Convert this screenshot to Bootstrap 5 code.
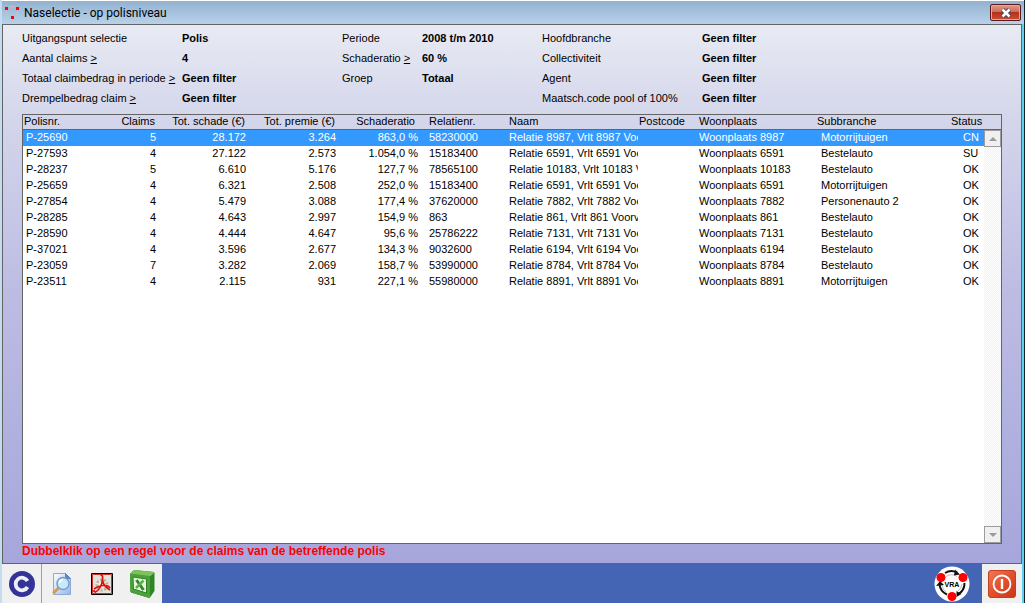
<!DOCTYPE html>
<html lang="nl">
<head>
<meta charset="utf-8">
<meta name="viewport" content="width=device-width, initial-scale=1">
<title>Naselectie - op polisniveau</title>
<link href="https://cdn.jsdelivr.net/npm/bootstrap@5.3.0/dist/css/bootstrap.min.css" rel="stylesheet">
<style>
  body { font: 11px/16px "Liberation Sans", Arial, sans-serif; color: #000; background: #b9d1ea; }
  .app-window { border-left: 2px solid #c4dcf2; border-right: 1px solid #10242c; box-shadow: inset -2px 0 #5cd0ee; padding-right: 2px; }
  .titlebar { height: 24px; margin-right: -2px; padding: 0 3px 0 2px; background: linear-gradient(#fff 0, #fff 1px, #93b2d0 1px, #b9d1ea 24px); }
  .titlebar h1 { font: 12px/24px Roboto, "Segoe UI", sans-serif; margin: 2px 0 0 4px; }
  .btn-close-win { width: 31px; height: 17px; margin-top: 1px; border: 1px solid #5a1a1c; border-radius: 2px; box-shadow: inset 0 0 0 1px #e6a79b; background: linear-gradient(#dd9a8c 0, #cf6b58 46%, #b5301a 50%, #c9503a 100%); }
  .panel { border: 1px solid #646464; padding: 3px 19px 4px 19px; background: linear-gradient(#e8ebf3 0, #d4d6eb 17%, #bcbce3 50%, #a6a6dc 100%); }
  .filters { display: grid; grid-template-columns: 160px 160px 80px 120px 160px 1fr; grid-auto-rows: 20px; line-height: 20px; margin-bottom: 6px; white-space: nowrap; }
  .filters dd, .filters dt { margin: 0; font-weight: 400; }
  .filters dd { font-weight: 700; }
  .c1 { grid-column: 1; } .c3 { grid-column: 3; } .c5 { grid-column: 5; }
  .listbox { border: 1px solid #646464; background: linear-gradient(transparent 15px, #fff 15px); }
  .polis { table-layout: fixed; width: 100%; border-collapse: separate; border-spacing: 0; }
  .polis th, .polis td { padding: 0; overflow: hidden; white-space: nowrap; font-weight: 400; vertical-align: top; }
  .polis th { height: 15px; line-height: 13px; border-bottom: 1px solid #646464; padding-left: 1px; }
  .polis td { height: 16px; line-height: 14px; padding-left: 3px; }
  .polis td:last-child { padding-left: 15px; }
  .polis th.num { text-align: right; padding-right: 3px; }
  .polis td.num { text-align: right; padding-right: 2px; }
  .polis th.ratio { padding-right: 5px; }
  .polis .rel { padding-left: 9px; }
  .polis th.inset { padding-left: 3px; }
  .polis th.sub { padding-left: 0; }
  .polis td.sub { padding-left: 4px; }
  .chosen td { background: #3399ff; color: #fff; }
  .w36 { width: 36px; } .w55 { width: 55px; } .w58 { width: 58px; } .w80 { width: 80px; } .w82 { width: 82px; }
  .w86 { width: 86px; } .w90 { width: 90px; } .w121 { width: 121px; } .w131 { width: 131px; }
  .scroll { width: 17px; }
  .scroll-cap { height: 15px; border-bottom: 1px solid #646464; }
  .track { background: repeating-conic-gradient(#f0f0f0 0 25%, #fff 0 50%) 0 0 / 2px 2px; }
  .scroll button { height: 17px; border: 1px solid #9c9c9c; background: #f0f0f0; }
  .hint { color: #f00; font-weight: 700; font-size: 12px; line-height: 15px; margin: 0; }
  .footbar { height: 39px; background: #4464b4; }
  .tool { width: 40px; height: 39px; border: 0; background: #f0f0f0; }
  .tool-c { border-right: 1px solid #a0a0a0; }
  .brand { margin-right: 12px; }
</style>
</head>
<body>
<div class="app-window min-vh-100 d-flex flex-column">
  <header class="titlebar d-flex align-items-center">
    <svg width="16" height="16" viewBox="0 0 16 16" aria-hidden="true"><path d="M5 3a6 6 0 0 1 6 0M2 6a7 7 0 0 0 3 6M14 7a7 7 0 0 1-3 5" fill="none" stroke="#c4c4c4"/><path d="M1 3h3v3H1zM12 3h3v3h-3zM7 12h3v3H7z" fill="#f00"/></svg>
    <h1>Naselectie - op polisniveau</h1>
    <button class="btn-close-win ms-auto p-0 d-flex align-items-center justify-content-center" aria-label="Sluiten"><svg width="12" height="10" viewBox="0 0 12 10"><path d="M2.500 1.500l7 7M9.500 1.500l-7 7" stroke="#404858" stroke-width="4.500"/><path d="M2.500 1.500l7 7M9.500 1.500l-7 7" stroke="#fff" stroke-width="2.500"/></svg></button>
  </header>

  <main class="panel flex-grow-1 d-flex flex-column">
    <dl class="filters">
      <dt class="c1">Uitgangspunt selectie</dt><dd>Polis</dd>
      <dt class="c3">Periode</dt><dd>2008 t/m 2010</dd>
      <dt class="c5">Hoofdbranche</dt><dd>Geen filter</dd>
      <dt class="c1">Aantal claims <u>&gt;</u></dt><dd>4</dd>
      <dt class="c3">Schaderatio <u>&gt;</u></dt><dd>60 %</dd>
      <dt class="c5">Collectiviteit</dt><dd>Geen filter</dd>
      <dt class="c1">Totaal claimbedrag in periode <u>&gt;</u></dt><dd>Geen filter</dd>
      <dt class="c3">Groep</dt><dd>Totaal</dd>
      <dt class="c5">Agent</dt><dd>Geen filter</dd>
      <dt class="c1">Drempelbedrag claim <u>&gt;</u></dt><dd>Geen filter</dd>
      <dt class="c5">Maatsch.code pool of 100%</dt><dd>Geen filter</dd>
    </dl>

    <div class="listbox flex-grow-1 d-flex">
      <div class="flex-grow-1">
        <table class="polis">
          <colgroup><col class="w80"><col class="w55"><col class="w90"><col class="w90"><col class="w82"><col class="w86"><col><col class="w58"><col class="w121"><col class="w131"><col class="w36"></colgroup>
          <thead><tr><th>Polisnr.</th><th class="num">Claims</th><th class="num">Tot. schade (€)</th><th class="num">Tot. premie (€)</th><th class="num ratio">Schaderatio</th><th class="rel">Relatienr.</th><th class="inset">Naam</th><th>Postcode</th><th class="inset">Woonplaats</th><th class="sub">Subbranche</th><th class="inset">Status</th></tr></thead>
          <tbody>
            <tr class="chosen"><td>P-25690</td><td class="num">5</td><td class="num">28.172</td><td class="num">3.264</td><td class="num">863,0 %</td><td class="rel">58230000</td><td>Relatie 8987, Vrlt 8987 Voorv</td><td></td><td>Woonplaats 8987</td><td class="sub">Motorrijtuigen</td><td>CN</td></tr>
            <tr><td>P-27593</td><td class="num">4</td><td class="num">27.122</td><td class="num">2.573</td><td class="num">1.054,0 %</td><td class="rel">15183400</td><td>Relatie 6591, Vrlt 6591 Voorv</td><td></td><td>Woonplaats 6591</td><td class="sub">Bestelauto</td><td>SU</td></tr>
            <tr><td>P-28237</td><td class="num">5</td><td class="num">6.610</td><td class="num">5.176</td><td class="num">127,7 %</td><td class="rel">78565100</td><td>Relatie 10183, Vrlt 10183 Voorv</td><td></td><td>Woonplaats 10183</td><td class="sub">Bestelauto</td><td>OK</td></tr>
            <tr><td>P-25659</td><td class="num">4</td><td class="num">6.321</td><td class="num">2.508</td><td class="num">252,0 %</td><td class="rel">15183400</td><td>Relatie 6591, Vrlt 6591 Voorv</td><td></td><td>Woonplaats 6591</td><td class="sub">Motorrijtuigen</td><td>OK</td></tr>
            <tr><td>P-27854</td><td class="num">4</td><td class="num">5.479</td><td class="num">3.088</td><td class="num">177,4 %</td><td class="rel">37620000</td><td>Relatie 7882, Vrlt 7882 Voorv</td><td></td><td>Woonplaats 7882</td><td class="sub">Personenauto 2</td><td>OK</td></tr>
            <tr><td>P-28285</td><td class="num">4</td><td class="num">4.643</td><td class="num">2.997</td><td class="num">154,9 %</td><td class="rel">863</td><td>Relatie 861, Vrlt 861 Voorv</td><td></td><td>Woonplaats 861</td><td class="sub">Bestelauto</td><td>OK</td></tr>
            <tr><td>P-28590</td><td class="num">4</td><td class="num">4.444</td><td class="num">4.647</td><td class="num">95,6 %</td><td class="rel">25786222</td><td>Relatie 7131, Vrlt 7131 Voorv</td><td></td><td>Woonplaats 7131</td><td class="sub">Bestelauto</td><td>OK</td></tr>
            <tr><td>P-37021</td><td class="num">4</td><td class="num">3.596</td><td class="num">2.677</td><td class="num">134,3 %</td><td class="rel">9032600</td><td>Relatie 6194, Vrlt 6194 Voorv</td><td></td><td>Woonplaats 6194</td><td class="sub">Bestelauto</td><td>OK</td></tr>
            <tr><td>P-23059</td><td class="num">7</td><td class="num">3.282</td><td class="num">2.069</td><td class="num">158,7 %</td><td class="rel">53990000</td><td>Relatie 8784, Vrlt 8784 Voorv</td><td></td><td>Woonplaats 8784</td><td class="sub">Bestelauto</td><td>OK</td></tr>
            <tr><td>P-23511</td><td class="num">4</td><td class="num">2.115</td><td class="num">931</td><td class="num">227,1 %</td><td class="rel">55980000</td><td>Relatie 8891, Vrlt 8891 Voorv</td><td></td><td>Woonplaats 8891</td><td class="sub">Motorrijtuigen</td><td>OK</td></tr>
          </tbody>
        </table>
      </div>
      <div class="scroll flex-shrink-0 d-flex flex-column">
        <div class="scroll-cap"></div>
        <div class="track flex-grow-1 d-flex flex-column justify-content-between">
          <button class="p-0 d-flex align-items-center justify-content-center" aria-label="Omhoog"><svg width="8" height="4"><path d="M4 0l4 4H0z" fill="#9a9a9a"/></svg></button>
          <button class="p-0 d-flex align-items-center justify-content-center" aria-label="Omlaag"><svg width="8" height="4"><path d="M0 0h8L4 4z" fill="#9a9a9a"/></svg></button>
        </div>
      </div>
    </div>
    <p class="hint">Dubbelklik op een regel voor de claims van de betreffende polis</p>
  </main>

  <footer class="footbar d-flex align-items-center">
    <button class="tool tool-c p-0 d-flex align-items-center justify-content-center" aria-label="Copyright">
      <svg width="26" height="26" viewBox="0 0 26 26"><circle cx="13" cy="13" r="13" fill="#333399"/><path d="M18.500 10A6.300 6.300 0 1 0 18.500 16" fill="none" stroke="#f0f0f0" stroke-width="3.800"/></svg>
    </button>
    <button class="tool p-0 d-flex align-items-center justify-content-center" aria-label="Afdrukvoorbeeld">
      <svg width="20" height="24" viewBox="0 0 20 24"><defs><linearGradient id="pg" x1="0" y1="0" x2="1" y2="1"><stop offset="0" stop-color="#fff"/><stop offset="1" stop-color="#8fb8ec"/></linearGradient></defs><path d="M1.500 1.500h12l5 5v16h-17z" fill="url(#pg)" stroke="#8fa9d6"/><path d="M13.500 1.500v5h5z" fill="#5b83c4" stroke="#5b83c4"/><path d="M6.500 16l-4.500 4.500" stroke="#d99a4e" stroke-width="3" stroke-linecap="round"/><circle cx="11" cy="11.500" r="6" fill="#c5eafa" stroke="#7c9cc4" stroke-width="1.500"/><path d="M7.800 11a3.200 3.200 0 0 1 3.200-3.200" fill="none" stroke="#fff" stroke-width="1.500"/></svg>
    </button>
    <button class="tool p-0 d-flex align-items-center justify-content-center" aria-label="PDF">
      <svg width="22" height="22" viewBox="0 0 22 22"><path d="M.5.5h21v21H.5z" fill="#e4e2da" stroke="#000"/><path d="M1.500 1.500h19v19h-19z" fill="none" stroke="#c33"/><circle cx="11" cy="12" r="5" fill="#f5f3e8" stroke="#b8b49c" stroke-width="3" stroke-dasharray="2 1.500"/><path d="M9.500 2.500c1.500-1 2.500.5 2 3.500-.3 3-.5 4.500-1.500 6.500-1.500 3.500-4 6-6.500 7M3 16c2-1.500 5-3 8.500-3.500 3.500-.2 6 .3 7.500 2.500M11.500 6c0 4 3 8.500 7.500 11M3 17v2" fill="none" stroke="#e01010" stroke-width="1.700"/></svg>
    </button>
    <button class="tool p-0 d-flex align-items-center justify-content-center" aria-label="Excel">
      <svg width="26" height="30" viewBox="0 0 26 30" stroke-linejoin="round"><path d="M1.500 5L5 1.500 25 3.500v18.500l-4.500 6.500L2 23z" fill="#2f8426" stroke="#2f8426"/><path d="M1.500 5L5 1.500l20 2-4 3.500z" fill="#7cc45a" stroke="#7cc45a"/><path d="M1.500 5L20.500 7.500v21L2 23z" fill="#4aa238" stroke="#4aa238"/><path d="M4 8l13.500 2v14L4.500 20z" fill="#e9f5df" stroke="#347f2b"/><path d="M7.500 11l7 10" stroke="#2f8a2c" stroke-width="3"/><path d="M14.500 11.500L7 19" stroke="#5ab04c" stroke-width="2.500"/></svg>
    </button>
    <svg class="brand ms-auto" width="36" height="36" viewBox="0 0 36 36" role="img" aria-label="VRA"><circle cx="18" cy="18" r="17.500" fill="#fff"/><g fill="none" stroke="#111" stroke-width="2"><path d="M11 7A12.500 12.500 0 0 1 23 6.500M30.500 17A12.500 12.500 0 0 1 24.500 28M13 28.500A12.500 12.500 0 0 1 5.500 18"/><path d="M12 10.500a10 10 0 0 1 11 0M28 18a10 10 0 0 1-4 7M12 26a10 10 0 0 1-4-7" stroke="#bbb" stroke-width="1"/></g><path d="M21 3.500l5 5-6 1zM22.500 25v6l5-3zM2 20l4-5 4 4z" fill="#111"/><g fill="#f00"><circle cx="7" cy="11.500" r="4.500"/><circle cx="29" cy="11.500" r="4.500"/><circle cx="18" cy="30.500" r="4.500"/></g><text x="18" y="20.500" text-anchor="middle" font-family="Liberation Sans" font-weight="700" font-size="7">VRA</text></svg>
    <button class="tool p-0 d-flex align-items-center justify-content-center" aria-label="Afsluiten">
      <svg width="28" height="28" viewBox="0 0 28 28"><defs><linearGradient id="pw" x1="0" y1="0" x2="1" y2="1"><stop offset="0" stop-color="#ee7a5c"/><stop offset=".5" stop-color="#e2502c"/><stop offset="1" stop-color="#cc3410"/></linearGradient></defs><rect x=".5" y=".5" width="27" height="27" rx="2.500" fill="url(#pw)" stroke="#c0401f"/><circle cx="14" cy="14" r="8.500" fill="none" stroke="#fff" stroke-width="1.800"/><path d="M14 9v10" stroke="#fff" stroke-width="2.400"/></svg>
    </button>
  </footer>
</div>
<script src="https://cdn.jsdelivr.net/npm/bootstrap@5.3.0/dist/js/bootstrap.bundle.min.js"></script>
</body>
</html>
